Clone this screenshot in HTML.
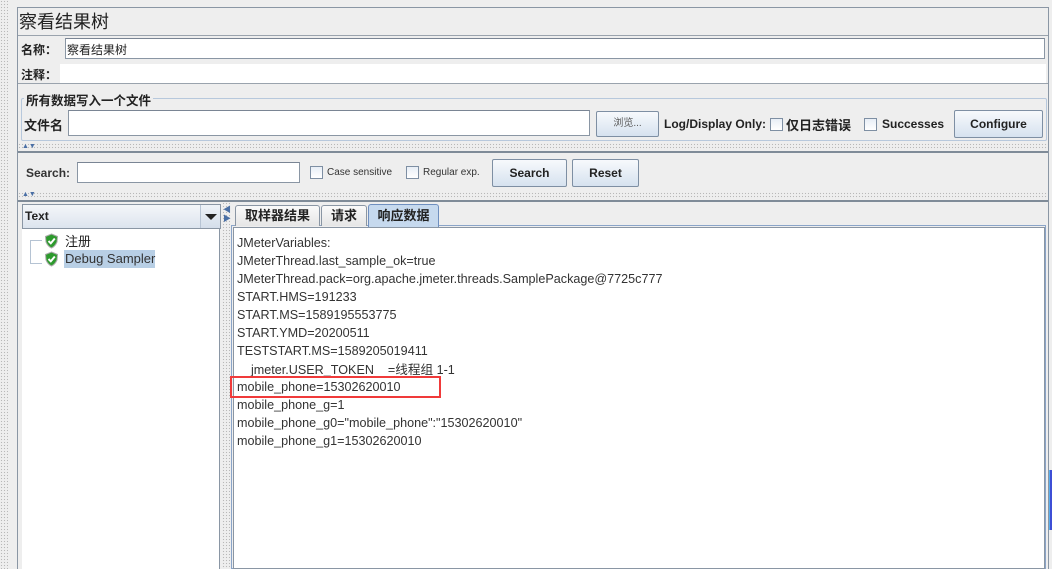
<!DOCTYPE html>
<html><head><meta charset="utf-8"><style>
*{box-sizing:border-box;margin:0;padding:0}
body{width:1052px;height:569px;overflow:hidden;background:#eeeeee;position:relative;font-family:"Liberation Sans","Noto Sans CJK SC",sans-serif;font-size:12px;color:#222}
.a{position:absolute}
.dots{background-image:radial-gradient(#b8b8b8 0.7px,transparent 0.8px);background-size:3px 3px}
.inp{position:absolute;background:#fff;border:1px solid #8a96a4;border-top-color:#7a8594}
.btn{position:absolute;border:1px solid #7e8fa3;background:linear-gradient(#f7f9fc,#d6e2ef);text-align:center;font-weight:bold;font-size:12px;color:#222;border-radius:2px}
.cb{position:absolute;width:13px;height:13px;border:1px solid #7e8fa3;background:linear-gradient(#e8eef6,#fff)}
.b{font-weight:bold}
.line{position:absolute;left:237px;font-size:12.6px;color:#333;white-space:pre}
</style></head><body>
<div class="a dots" style="left:0;top:0;width:8px;height:569px"></div>
<div class="a" style="left:8px;top:0;width:10px;height:569px;background:#eeeeee"></div>
<div class="a" style="left:17px;top:7px;width:1032px;height:562px;border-left:1px solid #8a96a4;border-top:1px solid #8a96a4;border-right:1px solid #8a96a4"></div>
<div class="a" style="left:19px;top:8px;font-size:18px;color:#222">察看结果树</div>
<div class="a" style="left:18px;top:35px;width:1030px;height:1px;background:#9aa3ad"></div>
<div class="a b" style="left:21px;top:41px;font-size:12px">名称：</div>
<div class="inp" style="left:65px;top:38px;width:980px;height:21px"></div>
<div class="a" style="left:67px;top:41px;font-size:12px">察看结果树</div>
<div class="a b" style="left:21px;top:66px;font-size:12px">注释：</div>
<div class="a" style="left:60px;top:64px;width:986px;height:19px;background:#fff"></div>
<div class="a" style="left:18px;top:83px;width:1030px;height:1px;background:#9aa3ad"></div>
<div class="a" style="left:21px;top:98px;width:1026px;height:43px;border:1px solid #b7c8dc;border-radius:2px"></div>
<div class="a b" style="left:24px;top:90px;padding:0 2px;background:#eee;font-size:12.5px">所有数据写入一个文件</div>
<div class="a b" style="left:24px;top:115px;font-size:13px">文件名</div>
<div class="inp" style="left:68px;top:110px;width:522px;height:26px"></div>
<div class="btn" style="left:596px;top:111px;width:63px;height:26px;font-weight:normal;font-size:10px;line-height:24px;color:#555">浏览...</div>
<div class="a b" style="left:664px;top:117px">Log/Display Only:</div>
<div class="cb" style="left:770px;top:118px"></div>
<div class="a b" style="left:786px;top:115px;font-size:13px">仅日志错误</div>
<div class="cb" style="left:864px;top:118px"></div>
<div class="a b" style="left:882px;top:117px">Successes</div>
<div class="btn" style="left:954px;top:110px;width:89px;height:28px;line-height:26px">Configure</div>
<div class="a dots" style="left:18px;top:143px;width:1030px;height:7px"></div>
<div class="a" style="left:22px;top:144px;color:#4a6fa5;font-size:7px;line-height:6px">▲▼</div>
<div class="a" style="left:18px;top:151px;width:1030px;height:2px;background:#7f8b98"></div>
<div class="a b" style="left:26px;top:166px;color:#333">Search:</div>
<div class="inp" style="left:77px;top:162px;width:223px;height:21px"></div>
<div class="cb" style="left:310px;top:166px"></div>
<div class="a" style="left:327px;top:167px;font-size:10px;color:#333">Case sensitive</div>
<div class="cb" style="left:406px;top:166px"></div>
<div class="a" style="left:423px;top:167px;font-size:10px;color:#333">Regular exp.</div>
<div class="btn" style="left:492px;top:159px;width:75px;height:28px;line-height:26px">Search</div>
<div class="btn" style="left:572px;top:159px;width:67px;height:28px;line-height:26px">Reset</div>
<div class="a dots" style="left:18px;top:192px;width:1030px;height:7px"></div>
<div class="a" style="left:22px;top:192px;color:#4a6fa5;font-size:7px;line-height:6px">▲▼</div>
<div class="a" style="left:18px;top:200px;width:1030px;height:2px;background:#7f8b98"></div>
<div class="a" style="left:22px;top:204px;width:199px;height:25px;border:1px solid #8a96a4;background:linear-gradient(#f4f6f9,#dce4ee)"></div>
<div class="a b" style="left:25px;top:209px;font-size:12px">Text</div>
<div class="a" style="left:200px;top:205px;width:20px;height:23px;border-left:1px solid #b7c4d4;background:linear-gradient(#eef2f7,#d4deea)"></div>
<div class="a" style="left:205px;top:214px;width:0;height:0;border-left:6px solid transparent;border-right:6px solid transparent;border-top:6px solid #222"></div>
<div class="a" style="left:22px;top:229px;width:198px;height:340px;background:#fff;border-right:1px solid #8a96a4"></div>
<div class="a" style="left:30px;top:240px;width:12px;height:24px;border-left:1px solid #b5c3d3;border-bottom:1px solid #b5c3d3"></div>
<div class="a" style="left:30px;top:240px;width:12px;height:1px;background:#b5c3d3"></div>
<svg class="a" style="left:44px;top:233px" width="15" height="16" viewBox="0 0 15 16"><path d="M7.5 1 L13.5 3.5 L13 9 Q11 13.5 7.5 15 Q4 13.5 2 9 L1.5 3.5Z" fill="#2d9a2d" stroke="#aaa" stroke-width="1"/><path d="M4.5 8 L6.8 10.3 L10.8 5.5" stroke="#fff" stroke-width="2" fill="none"/></svg>
<div class="a" style="left:65px;top:231px;font-size:13px">注册</div>
<svg class="a" style="left:44px;top:251px" width="15" height="16" viewBox="0 0 15 16"><path d="M7.5 1 L13.5 3.5 L13 9 Q11 13.5 7.5 15 Q4 13.5 2 9 L1.5 3.5Z" fill="#2d9a2d" stroke="#aaa" stroke-width="1"/><path d="M4.5 8 L6.8 10.3 L10.8 5.5" stroke="#fff" stroke-width="2" fill="none"/></svg>
<div class="a" style="left:64px;top:250px;width:91px;height:18px;background:#b8cfe5"></div>
<div class="a" style="left:65px;top:251px;font-size:13px;color:#333">Debug Sampler</div>
<div class="a dots" style="left:222px;top:202px;width:8px;height:367px"></div>
<div class="a" style="left:223px;top:205px;color:#4a6fa5;font-size:8px;line-height:9px">◀<br>▶</div>
<div class="a" style="left:231px;top:225px;width:815px;height:344px;border:1px solid #8aa4c8"></div>
<div class="a" style="left:233px;top:227px;width:812px;height:342px;border:1px solid #8a96a4;background:#fff"></div>
<div class="a b" style="left:235px;top:205px;width:85px;height:21px;border:1px solid #8a96a4;border-bottom:none;background:linear-gradient(#fafafa,#e6e6e6);text-align:center;line-height:20px;font-size:13px;border-radius:3px 3px 0 0">取样器结果</div>
<div class="a b" style="left:321px;top:205px;width:46px;height:21px;border:1px solid #8a96a4;border-bottom:none;background:linear-gradient(#fafafa,#e6e6e6);text-align:center;line-height:20px;font-size:13px;border-radius:3px 3px 0 0">请求</div>
<div class="a b" style="left:368px;top:204px;width:71px;height:23px;border:1px solid #6f8fbf;border-bottom:none;background:#c6d9ee;text-align:center;line-height:22px;font-size:13px;border-radius:3px 3px 0 0">响应数据</div>
<div class="line" style="top:236px">JMeterVariables:</div>
<div class="line" style="top:254px">JMeterThread.last_sample_ok=true</div>
<div class="line" style="top:272px">JMeterThread.pack=org.apache.jmeter.threads.SamplePackage@7725c777</div>
<div class="line" style="top:290px">START.HMS=191233</div>
<div class="line" style="top:308px">START.MS=1589195553775</div>
<div class="line" style="top:326px">START.YMD=20200511</div>
<div class="line" style="top:344px">TESTSTART.MS=1589205019411</div>
<div class="line" style="top:359px">    jmeter.USER_TOKEN    =线程组 1-1</div>
<div class="line" style="top:380px">mobile_phone=15302620010</div>
<div class="line" style="top:398px">mobile_phone_g=1</div>
<div class="line" style="top:416px">mobile_phone_g0="mobile_phone":"15302620010"</div>
<div class="line" style="top:434px">mobile_phone_g1=15302620010</div>
<div class="a" style="left:230px;top:376px;width:211px;height:22px;border:2px solid #f03a3a"></div>
<div class="a" style="left:1049px;top:470px;width:3px;height:60px;background:#3d4fd6;border-left:1px solid #5ab0f0"></div>
</body></html>
